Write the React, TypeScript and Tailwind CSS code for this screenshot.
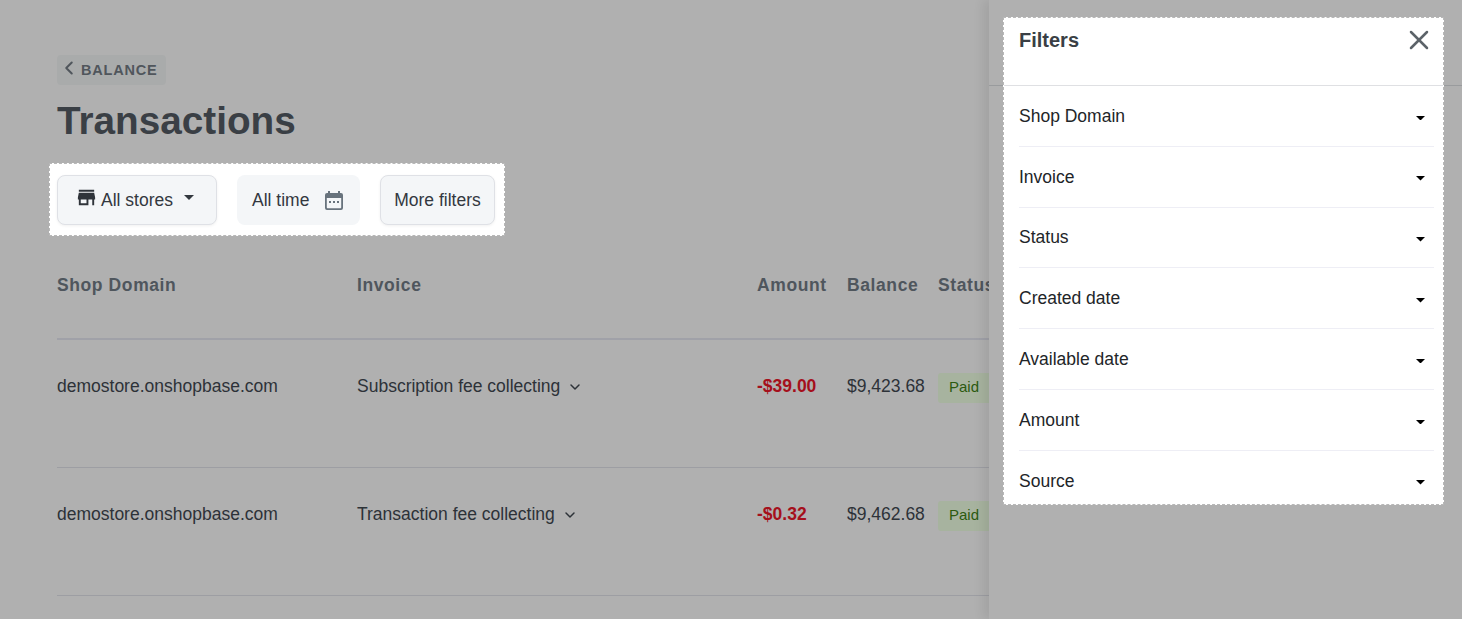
import { X, ChevronLeft, ChevronDown } from 'lucide-react';

const filters = ['Shop Domain', 'Invoice', 'Status', 'Created date', 'Available date', 'Amount', 'Source'];

const rows = [
  { shop: 'demostore.onshopbase.com', invoice: 'Subscription fee collecting', amount: '-$39.00', balance: '$9,423.68' },
  { shop: 'demostore.onshopbase.com', invoice: 'Transaction fee collecting', amount: '-$0.32', balance: '$9,462.68' },
];

const Caret = ({ className }: { className: string }) => (
  <svg viewBox="0 0 10 5" className={className} fill="currentColor">
    <path d="M0 0h10L5 5z" />
  </svg>
);

const StoreIcon = () => (
  <svg viewBox="0 0 24 24" className="mb-[6px] h-[23px] w-[23px] text-[#2f343a]" fill="currentColor">
    <path d="M20 4H4v2h16V4zm1 10v-2l-1-5H4l-1 5v2h1v6h10v-6h4v6h2v-6h1zm-9 4H6v-4h6v4z" />
  </svg>
);

const CalendarIcon = () => (
  <svg viewBox="0 0 18 19" className="mt-[1px] h-[19px] w-[18px] text-[#68737d]" fill="currentColor">
    <path d="M3 0h2v2h8V0h2v2h1a2 2 0 0 1 2 2v13a2 2 0 0 1-2 2H2a2 2 0 0 1-2-2V4a2 2 0 0 1 2-2h1V0zM1.8 7v9.2c0 .6.4 1 1 1h12.4c.6 0 1-.4 1-1V7H1.800z" />
    <rect x="4" y="10" width="2" height="2" />
    <rect x="8" y="10" width="2" height="2" />
    <rect x="12" y="10" width="2" height="2" />
  </svg>
);

const App = () => {
  return (
    <div className="relative h-[619px] w-[1462px] overflow-hidden bg-[#b0b0b0] font-['Liberation_Sans',Arial,sans-serif] text-[#2a2f35]">
      <div className="pl-[57px] pt-[55px]">
        <div className="flex h-[30px] w-[109px] items-center rounded-[4px] bg-[#a9abab] pl-[1px] text-[#50565c]">
          <ChevronLeft className="mb-[5px] h-[22px] w-[22px]" strokeWidth={2.2} />
          <span className="ml-[1px] pt-[2px] text-[14.5px] font-bold tracking-[0.8px]">BALANCE</span>
        </div>
        <h1 className="mt-[11px] h-[50px] text-[38.7px] leading-[50px] font-bold text-[#3a3f45]">Transactions</h1>

        <div className="-ml-[8px] mt-[17px] flex h-[73px] w-[456px] items-center gap-[20px] border border-dashed border-[#b8b8b8] bg-white pl-[7px] text-[17.5px] text-[#33383f]">
          <div className="flex h-[50px] w-[160px] items-center rounded-[8px] border border-[#dfe1e6] bg-[#f4f6f8] pl-[17px] pt-[1px] shadow-[0_1px_3px_rgba(0,0,0,0.06)]">
            <StoreIcon />
            <span className="ml-[3px]">All stores</span>
            <Caret className="mb-[5px] ml-[11px] h-[5px] w-[10px]" />
          </div>
          <div className="flex h-[50px] w-[123px] items-center gap-[16px] rounded-[8px] bg-[#f4f6f8] pl-[15px] pt-[1px]">
            <span>All time</span>
            <CalendarIcon />
          </div>
          <div className="flex h-[50px] w-[115px] items-center justify-center rounded-[8px] border border-[#dfe1e6] bg-[#f4f6f8] pt-[1px] shadow-[0_1px_3px_rgba(0,0,0,0.06)]">
            More filters
          </div>
        </div>

        <div className="mt-[28px] w-[1405px]">
          <div className="grid h-[76px] grid-cols-[300px_400px_90px_91px_1fr] border-b-2 border-[#a0a1a8] pb-[32px] text-[17.5px] font-bold tracking-[0.6px] text-[#4f565d]">
            <div className="flex items-center">Shop Domain</div>
            <div className="flex items-center">Invoice</div>
            <div className="flex items-center">Amount</div>
            <div className="flex items-center">Balance</div>
            <div className="flex items-center">Status</div>
          </div>
          {rows.map((row) => (
            <div
              key={row.invoice}
              className="grid h-[128px] grid-cols-[300px_400px_90px_91px_1fr] border-b border-[#9d9ea3] pb-[34px] text-[17.5px] text-[#2d3238]"
            >
              <div className="flex items-center">{row.shop}</div>
              <div className="flex items-center">
                <span>{row.invoice}</span>
                <ChevronDown className="ml-[7px] h-[16px] w-[16px]" strokeWidth={2.2} />
              </div>
              <div className="flex items-center font-bold text-[#a50f1b]">{row.amount}</div>
              <div className="flex items-center">{row.balance}</div>
              <div className="flex items-center">
                <span className="mt-[2px] flex h-[30px] w-[60px] items-center rounded-[3px] bg-[#a7b39f] pl-[11px] text-[15px] text-[#2c5a10]">Paid</span>
              </div>
            </div>
          ))}
        </div>
      </div>

      {/* filter drawer */}
      <div className="absolute top-0 right-0 h-full w-[473px] bg-[#b0b0b0] pt-[17px] pl-[14px] shadow-[-6px_0_10px_rgba(0,0,0,0.08)]">
        <div className="absolute top-[85px] left-0 h-px w-full bg-[#999b9d]" />
        <div className="relative h-[488px] w-[441px] border border-dashed border-[#b8b8b8] bg-white">
          <div className="flex h-[68px] items-start justify-between border-b border-[#dfe0e3] pl-[15px] pr-[8px] pt-[10px]">
            <span className="text-[20px] leading-[24px] font-bold text-[#3a3f45]">Filters</span>
            <X className="mt-[-4px] h-[32px] w-[32px] text-[#5c6369]" strokeWidth={1.9} />
          </div>
          <div className="pl-[15px] pr-[9px]">
            {filters.map((name) => (
              <div
                key={name}
                className="flex h-[60.8px] items-center justify-between border-b border-[#eeeef5] pr-[9px] text-[17.5px] text-[#222528] last:h-[59.8px] last:border-b-0"
              >
                <span>{name}</span>
                <Caret className="mt-[4px] h-[4.5px] w-[9px] text-black" />
              </div>
            ))}
          </div>
        </div>
      </div>
    </div>
  );
};

export default App;
